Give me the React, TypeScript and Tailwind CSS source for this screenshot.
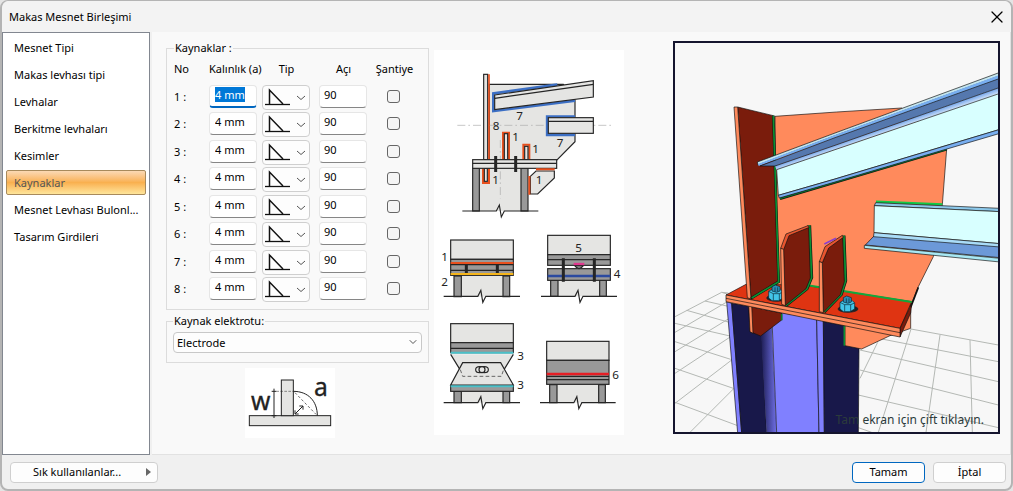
import { useEffect, useRef, useState } from "react"
import { ChevronDown, X } from "lucide-react"

const PAGES = [
  "Mesnet Tipi",
  "Makas levhası tipi",
  "Levhalar",
  "Berkitme levhaları",
  "Kesimler",
  "Kaynaklar",
  "Mesnet Levhası Bulonl...",
  "Tasarım Girdileri",
]

const WELDS = [1, 2, 3, 4, 5, 6, 7, 8]

const fieldClass =
  "block h-[23px] w-12 rounded-sm border border-[#e6e6e6] border-b-[#868686] bg-white pb-1 outline-none selection:bg-[#0078d7] selection:text-white"

function WeldRow({ no }: { no: number }) {
  const ref = useRef<HTMLInputElement>(null)

  useEffect(() => {
    if (no === 1) {
      ref.current?.focus()
      ref.current?.select()
    }
  }, [no])

  return (
    <tr className="align-top odd:h-[27px] even:h-7">
      <th scope="row" className="pt-1 text-left font-normal">
        {no} :
      </th>
      <td>
        <input
          ref={ref}
          aria-label={`Kalınlık ${no}`}
          defaultValue="4 mm"
          className={`${fieldClass} pl-[5px] focus:border-b-2 focus:border-b-[#0067c0]`}
        />
      </td>
      <td>
        <div className="relative h-[25px] w-12">
          <select
            aria-label={`Tip ${no}`}
            className="h-full w-full appearance-none rounded-sm border border-[#cfcfcf] bg-[#fdfdfd]"
          >
            <option value="fillet" />
          </select>
          <svg
            viewBox="0 0 48 25"
            className="pointer-events-none absolute inset-0 h-full w-full"
            fill="none"
            stroke="#111"
          >
            <path d="M3 19.500H28" strokeWidth="1.300" />
            <path d="M7.500 19V5L21 19" strokeWidth="1.500" />
            <path d="M35 11l4 3.500 4-3.500" stroke="#555" />
          </svg>
        </div>
      </td>
      <td>
        <input aria-label={`Açı ${no}`} defaultValue="90" className={`${fieldClass} pl-1`} />
      </td>
      <td className="pt-[5px] pr-0.5">
        <input
          type="checkbox"
          aria-label={`Şantiye ${no}`}
          className="mx-auto block size-[13px] appearance-none rounded-[3px] border border-[#666] bg-[#f5f5f5] checked:bg-[#0067c0]"
        />
      </td>
    </tr>
  )
}

// kolon altındaki kırık çizgi
function BreakLine({ x, y, w }: { x: number; y: number; w: number }) {
  const m = x + w / 2
  return (
    <path
      d={`M${x} ${y}H${m - 12}L${m - 3} ${y - 18}L${m + 3} ${y + 18}L${m + 12} ${y}H${x + w}`}
      fill="none"
    />
  )
}

function Legs({ x, y, h, gap = 147 }: { x: number; y: number; h: number; gap?: number }) {
  return (
    <>
      <rect x={x} y={y} width={gap + 20} height={h} fill="#e5e5e3" stroke="none" />
      <rect x={x} y={y} width="22" height={h} fill="#999" />
      <rect x={x + gap} y={y} width="20" height={h} fill="#999" />
    </>
  )
}

function WeldDiagram() {
  return (
    <svg viewBox="12 15 570 1155" className="block h-[385px] w-[190px] shrink-0 bg-white">
      <g stroke="#252525" strokeWidth="3.500" fill="#e5e5e3">
        <path d="M178 118H400L435 165V290L381 345H178Z" />
        <rect x="128" y="370" width="166" height="128" stroke="none" />
        <path d="M82 241H545M211 285V460" stroke="#aaa" strokeWidth="2" strokeDasharray="24 9 5 9" />
        <path d="M382 119L190 145V198L435 167" fill="none" stroke="#3c6fc4" strokeWidth="8" />
        <path d="M194 150L490 107V156L194 194Z" />
        <path d="M194 160L490 118" />
        <path d="M435 214H351V270H435" fill="none" stroke="#3c6fc4" strokeWidth="7" />
        <rect x="355" y="218" width="135" height="47" />
        <path d="M355 229H490" />
        <rect x="161" y="88" width="12" height="256" />
        <path d="M177 88V344" stroke="#e8501e" strokeWidth="5" />
        <path d="M219 344V263H237V344M280 344V299H298V344M159 370V414H177V370" fill="none" stroke="#e8501e" strokeWidth="6" />
        <rect x="223" y="266" width="10" height="78" />
        <rect x="284" y="304" width="10" height="40" />
        <rect x="163" y="370" width="9" height="39" />
        <rect x="128" y="370" width="20" height="128" fill="#999" />
        <rect x="273" y="370" width="21" height="128" fill="#999" />
        <rect x="128" y="344" width="252" height="26" />
        <path d="M128 355H380" />
        <path d="M197 333V381M257 333V381" strokeWidth="9" />
        <path d="M301 394L318 378H373V399L323 447H301Z" />
        <path d="M318 373H374M298 393V449" stroke="#e8501e" strokeWidth="6" />
        <BreakLine x={97} y={498} w={228} />
      </g>

      <g stroke="#252525" strokeWidth="3.500" fill="#999" transform="translate(0 525)">
        {/* 1-2 */}
        <Legs x={72} y={168} h={62} />
        <rect x="62" y="60" width="188" height="58" fill="#e5e5e3" />
        <rect x="62" y="118" width="188" height="48" />
        <path d="M62 134H250M62 151H250" />
        <path d="M62 129H250" stroke="#e8501e" strokeWidth="6" />
        <path d="M62 162H250" stroke="#f5b51b" strokeWidth="6" />
        <path d="M109 134V159M202 134V159" strokeWidth="9" />
        <BreakLine x={41} y={229} w={229} />

        {/* 4-5 */}
        <Legs x={362} y={181} h={48} />
        <rect x="353" y="46" width="188" height="58" fill="#e5e5e3" />
        <rect x="353" y="104" width="188" height="15" />
        <rect x="353" y="119" width="188" height="17" />
        <rect x="353" y="146" width="188" height="35" />
        <path d="M353 168H541" stroke="#2b4aa0" strokeWidth="7" />
        <path d="M400 115V185M493 115V185" strokeWidth="9" />
        <path d="M434 137Q447 155 460 137Z" />
        <path d="M431 132H463" stroke="#e0388e" strokeWidth="7" />
        <BreakLine x={333} y={229} w={228} />

        {/* 3 */}
        <Legs x={72} y={514} h={34} />
        <rect x="62" y="311" width="188" height="57" fill="#e5e5e3" />
        <rect x="62" y="368" width="188" height="30" />
        <path d="M62 385H250" />
        <path d="M62 403H250L214 466H98Z" fill="#e5e5e3" stroke="none" />
        <path d="M62 403L90 449M250 403L222 449" />
        <path d="M98 428H212L250 495H62Z" fill="#e5e5e3" />
        <path d="M91 449L98 469H214L221 449" fill="none" strokeWidth="2" strokeDasharray="11 7" />
        <ellipse cx="149" cy="449" rx="12" ry="9" fill="none" />
        <ellipse cx="163" cy="449" rx="12" ry="9" fill="none" />
        <circle cx="156" cy="449" r="9" fill="#e5e5e3" />
        <rect x="62" y="497" width="188" height="17" />
        <path d="M62 398H250M62 499H250" stroke="#4bc0c8" strokeWidth="6" />
        <BreakLine x={41} y={548} w={229} />

        {/* 6 */}
        <Legs x={359} y={494} h={54} />
        <rect x="350" y="364" width="187" height="57" fill="#e5e5e3" />
        <rect x="350" y="421" width="187" height="72" />
        <path d="M350 469H537M350 479H537" />
        <path d="M350 462H537" stroke="#e51e25" strokeWidth="7" />
        <BreakLine x={330} y={548} w={227} />
      </g>

      <g className="font-['Noto_Sans']" fontSize="35" fill="#222">
        <text x="259" y="224">7</text>
        <text x="188" y="254">8</text>
        <text x="247" y="287">1</text>
        <text x="307" y="323">1</text>
        <text x="380" y="305">7</text>
        <text x="187" y="416">1</text>
        <text x="317" y="416">1</text>
        <text x="34" y="648">1</text>
        <text x="34" y="723">2</text>
        <text x="436" y="620">5</text>
        <text x="551" y="699">4</text>
        <text x="262" y="944">3</text>
        <text x="262" y="1032">3</text>
        <text x="547" y="1002">6</text>
      </g>
    </svg>
  )
}

function WeldSizeFigure() {
  return (
    <svg viewBox="0 0 270 210" className="mt-[5px] ml-[79px] block h-[70px] w-[90px] bg-white">
      <g fill="none" stroke="#222" strokeWidth="3">
        <rect x="13" y="143" width="244" height="30" fill="#e5e5e3" />
        <rect x="109" y="36" width="36" height="107" fill="#e5e5e3" />
        <path d="M145 70C190 70 217 100 217 143" />
        <path d="M87 62V150M80 70H94M80 143H94" />
        <path d="M94 70H145" strokeWidth="1.500" strokeDasharray="8 4" />
        <path d="M150 74L213 139" strokeWidth="2" strokeDasharray="8 6" />
        <path d="M150 138L174 114M150 127V138H161M163 114H174V125" />
      </g>
      <g className="font-['Noto_Sans']" fontSize="74" fill="#222" stroke="#222" strokeWidth="1">
        <text x="18" y="125">w</text>
        <text x="207" y="83">a</text>
      </g>
    </svg>
  )
}

function Bolt({ x, y }: { x: number; y: number }) {
  return (
    <g transform={`translate(${x} ${y})`} stroke="#0b2430" strokeWidth="2">
      <ellipse cx="2" cy="14" rx="30" ry="10" fill="#222" />
      <path d="M-22 -6L-12 -12H14L22 -4V14L8 22H-12L-22 14Z" fill="#43c5e8" />
      <path d="M-22 -6L-8 1H10L22 -4M-8 1V21M10 1V21" fill="none" />
      <path d="M-12 -20L-2 -25L12 -20V-7L2 -3L-12 -7Z" fill="#2b8fb8" />
      <path d="M-3 -18V-5M5 -18V-5" />
    </g>
  )
}

function ModelView() {
  return (
    <svg
      viewBox="15 15 969 1167"
      preserveAspectRatio="xMidYMid slice"
      className="absolute inset-0 h-full w-full"
    >
      <defs>
        <linearGradient id="fillet">
          <stop offset="0" stopColor="#18184a" />
          <stop offset="1" stopColor="#7070e8" />
        </linearGradient>
        <linearGradient id="flange" gradientUnits="userSpaceOnUse" x1="640" y1="268" x2="648" y2="291">
          <stop offset="0" stopColor="#6a9ee8" />
          <stop offset="1" stopColor="#f4fbff" />
        </linearGradient>
      </defs>

      {/* zemin ızgarası */}
      <path
        d="M155 763L172 768M105 789L175 805M50 817L178 853M15 856L180 894M15 911L182 964M15 991L190 1051M15 1093L203 1163M15 836L155 763L175 765M15 883L172 791M15 941L178 841M15 1006L182 896M15 1096L185 966M60 1183L192 1051
           M723 873L985 921M625 901L985 971M570 936L985 1031M570 996L985 1101M565 1071L985 1169M565 1169L605 1183M723 873L625 1183M623 913L570 1021M810 891L768 1183M900 906L907 1183"
        fill="none"
        stroke="#b4b8b4"
        strokeWidth="3"
      />

      <g stroke="#111" strokeWidth="2">
        {/* kolon */}
        <path d="M170 791L185 796L215 1185H203Z" fill="#8080ff" />
        <path d="M185 796L275 810V890L290 1185H215Z" fill="#18184a" />
        <path d="M270 850H305L320 1185H290Z" fill="url(#fillet)" stroke="none" />
        <path d="M305 820L440 840L447 1185H320Z" fill="#8080ff" />
        <path d="M440 840L460 850L463 1185H447Z" fill="#8080ff" />
        <path d="M460 850L567 870V931L565 1185H463Z" fill="#18184a" />

        {/* düğüm levhası */}
        <path d="M525 850L722 800V871L660 893L575 933L525 923Z" fill="#ff8a5c" />
        <path d="M523 860V923" stroke="#0b9033" strokeWidth="5" />
        <path d="M315 235L500 222L695 210L830 320V333L817 500L790 656L745 746L725 796L515 762L320 745Z" fill="#ff8a5c" />
        <path d="M745 748L722 808" fill="none" strokeWidth="5" />

        {/* alt levha */}
        <path d="M168 771L228 739L400 741L725 791L690 871Z" fill="#df3412" />
        <path d="M408 741L725 792" stroke="#12a83c" strokeWidth="6" />
        <path d="M690 871L725 796L722 825L690 897Z" fill="#7a1c0c" />

        {/* alt berkitme */}
        <path d="M236 805L335 825V846L272 894L240 881Z" fill="#7a1c0c" />
        <path d="M236 800H245L249 886L240 881Z" fill="#ff8a5c" />
        <path d="M335 828V847" stroke="#0b7a2b" strokeWidth="5" />
        <path d="M168 771L690 871V897L168 791Z" fill="#ff8a5c" />
        <path d="M168 781L690 884" />

        {/* uç levhası */}
        <path d="M203 207L310 233L327 731L243 783Z" fill="#7a1c0c" />
        <path d="M192 207H203L243 783L232 779Z" fill="#ff8a5c" />
        <path d="M310 233L326 731L243 781" fill="none" stroke="#111" strokeWidth="8" />
        <path d="M310 233L326 731L245 780" fill="none" stroke="#0b9033" strokeWidth="5" />
        <Bolt x={318} y={766} />

        {/* berkitme 1 */}
        <path d="M418 562L424 718L410 752L347 802" fill="none" strokeWidth="11" />
        <path d="M418 562L424 718L410 752L347 802" fill="none" stroke="#0b9033" strokeWidth="7" />
        <path d="M340 634L358 590L416 567L421 720L408 752L345 803Z" fill="#7a1c0c" />
        <path d="M332 631L348 588L414 563L418 568L357 593L341 635Z" fill="#e8552f" />
        <path d="M332 631L341 634L346 803L335 799Z" fill="#ff8a5c" />

        {/* berkitme 2 */}
        <path d="M521 593L526 728L513 769L462 821" fill="none" strokeWidth="11" />
        <path d="M521 593L526 728L513 769L462 821" fill="none" stroke="#0b9033" strokeWidth="7" />
        <path d="M457 674L476 628L518 597L523 731L511 770L460 823Z" fill="#7a1c0c" />
        <path d="M448 671L465 626L517 592L520 598L476 630L457 674Z" fill="#e8552f" />
        <path d="M448 671L457 674L460 824L448 821Z" fill="#ff8a5c" />
        <path d="M463 618L498 601" stroke="#8a3fd0" strokeWidth="5" />
        <Bolt x={532} y={799} />

        {/* üst başlık profili */}
        <path d="M330 482L830 334" stroke="#111" strokeWidth="8" />
        <path d="M330 482L830 334" stroke="#0b7a2b" strokeWidth="4" />
        <path d="M315 384L495 322L990 148V166L495 335L320 397Z" fill="url(#flange)" stroke="none" />
        <path d="M320 395L495 335L990 166V274L495 423L325 472Z" fill="#d8ffff" />
        <path d="M325 472L495 423L990 274V286L495 432L328 480Z" fill="#78aef0" />
        <path d="M262 372L495 285L990 103V113L495 293L264 381Z" fill="#c5e6ee" />
        <path d="M264 378L495 291L990 110V122L495 300L266 384Z" fill="#78aef0" stroke="none" />
        <path d="M270 384L495 299L990 121V148L495 322L315 384Z" fill="#5578ae" />

        {/* alt başlık profili */}
        <path d="M618 491L817 499" stroke="#12c848" strokeWidth="7" />
        <path d="M617 494L990 511V521L613 503Z" fill="#8cc8ea" />
        <path d="M613 503L990 521V617L612 584Z" fill="#d8ffff" />
        <path d="M612 584L990 617V631L610 601Z" fill="#a9dcf8" />
        <path d="M610 596L990 627V659L586 621Z" fill="#6c99d8" />
        <path d="M583 622L990 661V672L583 631Z" fill="#a8e8f4" />
      </g>
    </svg>
  )
}

export default function App() {
  const [page, setPage] = useState("Kaynaklar")

  return (
    <div className="bg-[#e4e4e4]">
      <div className="flex min-h-screen flex-col rounded-lg border-2 border-t border-[#b4b4b4] bg-[#f0f0f0] font-['Noto_Sans',sans-serif] text-[11px] leading-4 text-black">
        <header className="flex h-[31px] items-center justify-between rounded-t-lg bg-[#f3f3f3] pr-1 pl-[7px]">
          <h1>Makas Mesnet Birleşimi</h1>
          <button aria-label="Kapat">
            <X className="size-5" strokeWidth={1.5} />
          </button>
        </header>

        <div className="flex flex-1">
          <nav className="w-[148px] shrink-0 border border-[#828790] bg-white px-[3px] pt-0.5">
            {PAGES.map((name) => (
              <button
                key={name}
                onClick={() => setPage(name)}
                className={`mb-0.5 block h-[25px] w-full rounded-xs border px-[7px] text-left whitespace-nowrap ${
                  name === page
                    ? "border-[#a88a5c] bg-linear-to-b from-[#fbd9b4] via-[#f9b04f] to-[#fee59a] text-[#555]"
                    : "border-transparent"
                }`}
              >
                {name}
              </button>
            ))}
          </nav>

          <main className="ml-0.5 flex flex-1 items-start border-r border-b border-[#e2e2e2] bg-[#f9f9f9] pr-2.5 pb-4 pl-3.5">
            <div className="w-[263px] shrink-0 pt-2">
              <fieldset className="h-[270px] border border-[#dcdcdc] px-[7px]">
                <legend className="px-px">Kaynaklar :</legend>
                <table className="mt-[5px] w-full table-fixed border-collapse">
                  <colgroup>
                    <col className="w-[35px]" />
                    <col className="w-[53px]" />
                    <col className="w-[57px]" />
                    <col className="w-[49px]" />
                    <col />
                  </colgroup>
                  <thead>
                    <tr className="h-6 align-top whitespace-nowrap">
                      <th className="text-left font-normal">No</th>
                      <th className="text-left font-normal">Kalınlık (a)</th>
                      <th className="pr-2 font-normal">Tip</th>
                      <th className="font-normal">Açı</th>
                      <th className="font-normal">Şantiye</th>
                    </tr>
                  </thead>
                  <tbody>
                    {WELDS.map((no) => (
                      <WeldRow key={no} no={no} />
                    ))}
                  </tbody>
                </table>
              </fieldset>

              <fieldset className="mt-[3px] h-[50px] border border-[#dcdcdc] px-1.5">
                <legend className="px-px">
                  <label htmlFor="electrode">Kaynak elektrotu:</label>
                </legend>
                <div className="relative mt-[3px]">
                  <select
                    id="electrode"
                    className="h-[21px] w-full appearance-none rounded-sm border border-[#c8c8c8] bg-[#fdfdfd] px-[3px]"
                  >
                    <option>Electrode</option>
                  </select>
                  <ChevronDown
                    className="pointer-events-none absolute top-1 right-[3px] size-3 text-[#555]"
                    strokeWidth={2}
                  />
                </div>
              </fieldset>
              <WeldSizeFigure />
            </div>

            <div className="mt-[18px] ml-[5px]">
              <WeldDiagram />
            </div>

            <div className="relative mt-[9px] ml-[49px] h-[393px] flex-1 border-2 border-[#15152e] bg-[#f7f7f7]">
              <ModelView />
              <p className="absolute right-3.5 bottom-1 text-xs whitespace-nowrap text-[#2c3b3b]">
                Tam ekran için çift tıklayın.
              </p>
            </div>
          </main>
        </div>

        <footer className="flex h-[34px] items-center gap-2 pr-[5px] pl-2">
          <button className="mr-auto flex h-[21px] w-[148px] items-center justify-between rounded-sm border border-[#cfcfcf] bg-[#fdfdfd] pr-1.5 pl-[22px]">
            Sık kullanılanlar...
            <svg viewBox="0 0 5 8" className="h-2 w-[5px]" fill="#666">
              <path d="M0 0L5 4L0 8Z" />
            </svg>
          </button>
          <button className="h-[21px] w-[73px] rounded-sm border border-[#0067c0] bg-[#fdfdfd]">
            Tamam
          </button>
          <button className="h-[21px] w-[73px] rounded-sm border border-[#cfcfcf] bg-[#fdfdfd]">
            İptal
          </button>
        </footer>
      </div>
    </div>
  )
}
